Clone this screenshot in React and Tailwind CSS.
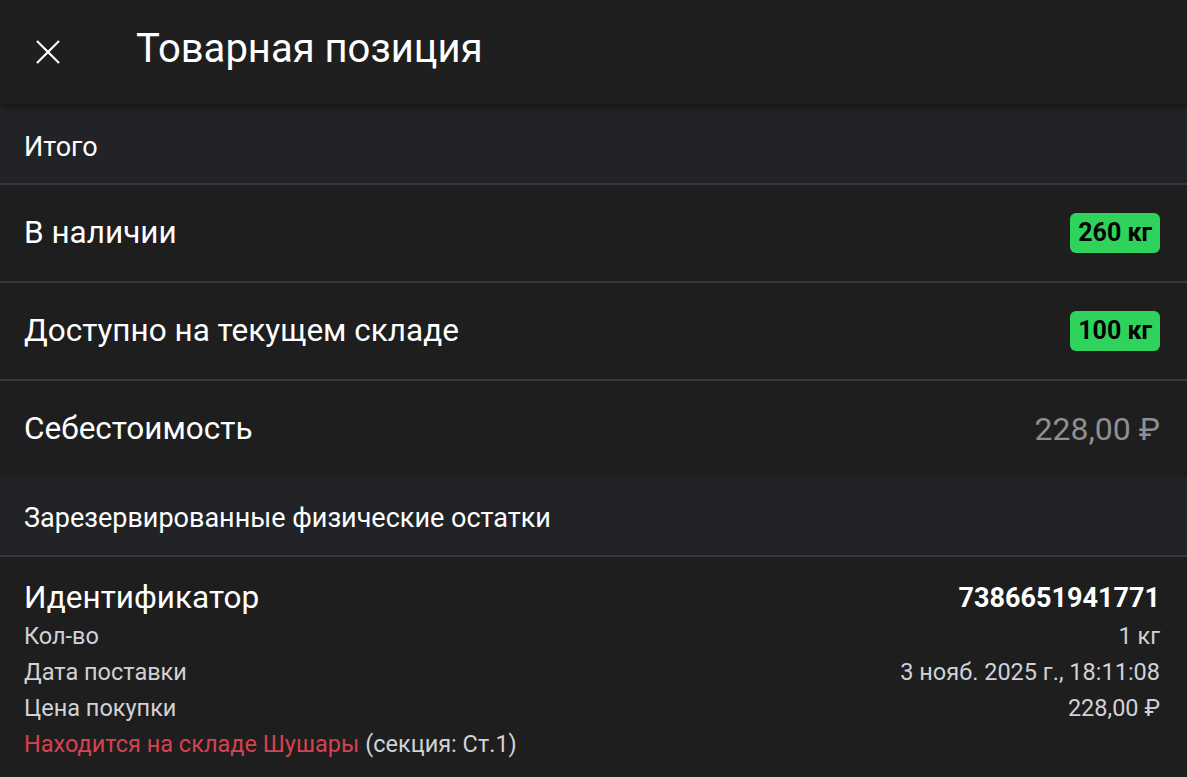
import React from 'react'

const font = { fontFamily: 'Roboto, "Noto Sans", sans-serif' }

const SectionTitle = ({ children, h }) => (
  <div className={`${h} flex items-center px-6 bg-[#222327] border-b-2 border-[#38383a] text-[27px] text-white`}>
    {children}
  </div>
)

const Badge = ({ children }) => (
  <span className="h-10 px-2 flex items-center rounded-md bg-[#2fd35c] text-black font-bold text-[25px]">
    {children}
  </span>
)

const Row = ({ label, children, last }) => (
  <div className={`flex items-center justify-between pl-6 pr-[27px] ${last ? 'h-[96px]' : 'h-[98px] border-b-2 border-[#38383a]'}`}>
    <span className="text-[31.5px] text-white">{label}</span>
    {children}
  </div>
)

const Detail = ({ label, value }) => (
  <div className="h-9 flex items-center justify-between text-[23.5px] text-[#d1d1d6]">
    <span>{label}</span>
    <span>{value}</span>
  </div>
)

export default function App() {
  return (
    <div className="w-[1187px] h-[777px] bg-[#1e1e1e] overflow-hidden" style={font}>
      <div className="relative z-10 h-[104px] flex items-center bg-[#1f1f1f] shadow-[0_3px_6px_rgba(0,0,0,0.45)]">
        <button className="w-24 h-full flex items-center justify-center text-white">
          <svg width="24" height="24" viewBox="0 0 24 24" fill="none" stroke="currentColor" strokeWidth="2.2">
            <path d="M1 1L23 23M23 1L1 23" />
          </svg>
        </button>
        <h1 className="ml-10 pb-[6px] text-[40px] text-white font-normal">Товарная позиция</h1>
      </div>

      <SectionTitle h="h-[81px] pt-2">Итого</SectionTitle>
      <Row label="В наличии"><Badge>260 кг</Badge></Row>
      <Row label="Доступно на текущем складе"><Badge>100 кг</Badge></Row>
      <Row label="Себестоимость" last>
        <span className="text-[32px] text-[#8e8e93]">228,00 ₽</span>
      </Row>

      <SectionTitle h="h-[80px] pt-1">Зарезервированные физические остатки</SectionTitle>
      <div className="pl-6 pr-[27px] pt-5">
        <div className="h-[42px] flex items-center justify-between text-white">
          <span className="text-[31.5px]">Идентификатор</span>
          <span className="text-[27px] font-bold">7386651941771</span>
        </div>
        <Detail label="Кол-во" value="1 кг" />
        <Detail label="Дата поставки" value="3 нояб. 2025 г., 18:11:08" />
        <Detail label="Цена покупки" value="228,00 ₽" />
        <div className="h-9 flex items-center text-[23.5px] text-[#d1d1d6]">
          <span className="text-[#d6424f]">Находится на складе Шушары</span>
          <span className="ml-[6px]">(секция: Ст.1)</span>
        </div>
      </div>
    </div>
  )
}
